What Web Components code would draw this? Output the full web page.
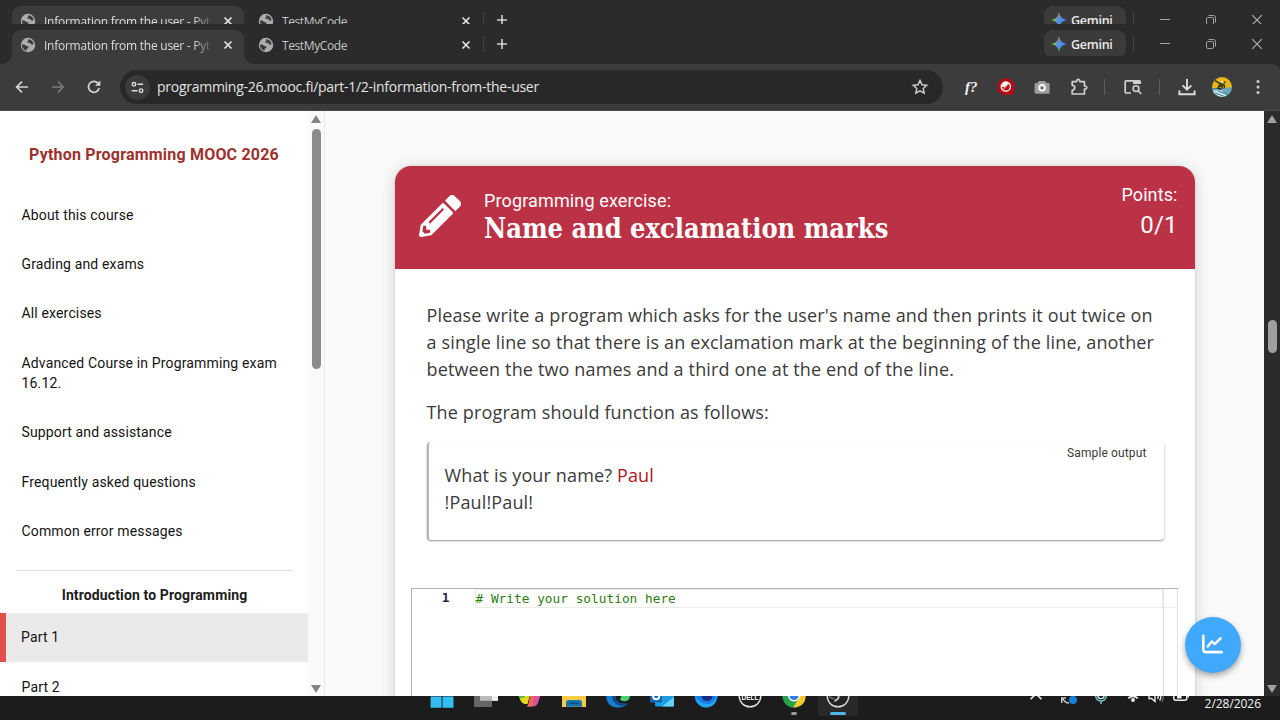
<!DOCTYPE html>
<html lang="en">
<head>
<meta charset="utf-8">
<title>Information from the user - Python Programming MOOC 2026</title>
<style>
    html, body {
        margin: 0;
        height: 100%;
        overflow: hidden;
    }
    body {
        display: flex;
        flex-direction: column;
        width: 1280px;
        height: 720px;
        background: #fff;
        font-family: Roboto, sans-serif;
    }
    .ghost {
        height: 24px;
        flex: none;
        overflow: hidden;
    }
    main {
        display: flex;
        flex: 1;
        min-height: 0;
    }
</style>
</head>
<body>
<div class="ghost"><tab-strip></tab-strip></div>
<tab-strip></tab-strip>
<browser-toolbar url="programming-26.mooc.fi/part-1/2-information-from-the-user"></browser-toolbar>
<main>
    <course-sidebar heading="Python Programming MOOC 2026">
        <nav-item>About this course</nav-item>
        <nav-item>Grading and exams</nav-item>
        <nav-item>All exercises</nav-item>
        <nav-item>Advanced Course in Programming exam 16.12.</nav-item>
        <nav-item>Support and assistance</nav-item>
        <nav-item>Frequently asked questions</nav-item>
        <nav-item>Common error messages</nav-item>
        <nav-section>Introduction to Programming</nav-section>
        <nav-item active>Part 1</nav-item>
        <nav-item>Part 2</nav-item>
    </course-sidebar>
    <content-pane>
        <exercise-card name="Name and exclamation marks" points="0/1">
            <p>Please write a program which asks for the user's name and then prints it out twice on<br>a single line so that there is an exclamation mark at the beginning of the line, another<br>between the two names and a third one at the end of the line.</p>
            <p>The program should function as follows:</p>
            <sample-output>What is your name? <span slot="input">Paul</span><span slot="rest">!Paul!Paul!</span></sample-output>
            <code-editor slot="editor"># Write your solution here</code-editor>
        </exercise-card>
        <points-button slot="floating"></points-button>
    </content-pane>
    <scroll-bar dark style="--top: 209px; --size: 33px"></scroll-bar>
</main>
<task-bar date="2/28/2026"></task-bar>

<script>
// every icon is [viewBox, markup]
const icons = {
    globe: ['0 0 16 16', '<circle cx="8" cy="8" r="7.2" fill="#adadad"/><path d="M1.800 7.600 4.800 7.800 6.400 9 8.400 9.400 8.200 11 6.800 11.800 6.600 13.800 4.600 13 2.600 11ZM7.800 2.600 9.800 2.400 12.400 4 13.600 6.400 12.800 7.800 11 7.200 10 5.800 8 6 7.400 4.600 8.400 3.800Z" fill="#3b3b3b"/>'],
    close: ['0 0 10 10', '<path d="M1.5 1.5 8.5 8.5M8.5 1.5 1.5 8.5" stroke="currentColor" stroke-width="1.6"/>'],
    plus: ['0 0 12 12', '<path d="M6 1V11M1 6H11" stroke="currentColor" stroke-width="1.6"/>'],
    gemini: ['0 0 16 16', '<defs><linearGradient id="g" x1="0" y1=".3" x2="1" y2=".6"><stop offset="0" stop-color="#f3c43c"/><stop offset=".3" stop-color="#5fb878"/><stop offset=".5" stop-color="#4f8df5"/><stop offset="1" stop-color="#4f8df5"/></linearGradient><linearGradient id="r" x1="0" y1="0" x2="0" y2="1"><stop offset="0" stop-color="#ee5a5a"/><stop offset=".42" stop-color="#ee5a7a" stop-opacity="0"/><stop offset=".65" stop-color="#3fae62" stop-opacity="0"/><stop offset="1" stop-color="#3fbe62"/></linearGradient></defs><path d="M8 .3C9 5 11 7 15.700 8 11 9 9 11 8 15.700 7 11 5 9 .3 8 5 7 7 5 8 .3Z" fill="url(#g)"/><path d="M8 .3C9 5 11 7 15.700 8 11 9 9 11 8 15.700 7 11 5 9 .3 8 5 7 7 5 8 .3Z" fill="url(#r)"/>'],
    minimize: ['0 0 12 12', '<path d="M1 5.500H11" stroke="#a2a2a2"/>'],
    restore: ['0 0 12 12', '<rect x="1.5" y="3.5" width="7" height="7" rx="1.4" fill="none" stroke="#a2a2a2"/><path d="M3.5 1.5H8.5Q10.5 1.5 10.5 3.5V8.5" fill="none" stroke="#a2a2a2"/>'],
    exit: ['0 0 12 12', '<path d="M1.2 1.2 10.8 10.8M10.8 1.2 1.2 10.8" stroke="#b5b5b5" stroke-width="1.1"/>'],
    back: ['0 0 16 16', '<path d="M14 8H2.6M8 2.6 2.6 8 8 13.4" fill="none" stroke="#d4d4d4" stroke-width="1.7"/>'],
    forward: ['0 0 16 16', '<path d="M2 8H13.4M8 2.6 13.4 8 8 13.4" fill="none" stroke="#7d7d7d" stroke-width="1.5"/>'],
    reload: ['0 0 16 16', '<path d="M13.2 9A5.4 5.4 0 1 1 12 4.3L13.6 6" fill="none" stroke="#d4d4d4" stroke-width="1.7"/><path d="M14.3 1.6V6.8H9.1Z" fill="#d4d4d4"/>'],
    tune: ['0 0 16 16', '<g fill="none" stroke="#dedede" stroke-width="1.5"><circle cx="4.2" cy="4.6" r="1.9"/><path d="M8 4.6H14M1.8 11.4H8"/><circle cx="11.8" cy="11.4" r="1.9"/></g>'],
    star: ['0 0 18 18', '<path d="M9 2.400 11 6.800 15.800 7.300 12.200 10.500 13.200 15.200 9 12.800 4.800 15.200 5.800 10.500 2.200 7.300 7 6.800Z" fill="none" stroke="#d0d0d0" stroke-width="1.4"/>'],
    blocker: ['0 0 18 18', '<path d="M5.4.6H12.6L17.4 5.4V12.6L15.8 17H5.4L.6 12.6V5.4Z" fill="#b10f16"/><circle cx="8.8" cy="8.6" r="4.6" fill="none" stroke="#fff" stroke-width="1.3"/><path d="M5.2 8.6C5 5.4 8 4 11.2 5.2L8.6 7.8 7.6 8.8ZM6 11.6 11.8 5.6" fill="#fff" stroke="#fff" stroke-width=".8"/>'],
    camera: ['0 0 18 18', '<path d="M5.6 3H12.2L13.4 5H15.6Q16.6 5 16.6 6V14.6Q16.6 15.8 15.4 15.8H2.8Q1.6 15.8 1.6 14.6V6Q1.6 5 2.6 5H4.6Z" fill="#9d9d9d"/><circle cx="9" cy="9.8" r="2.8" fill="#777" stroke="#fff" stroke-width="1.9"/>'],
    puzzle: ['0 0 18 18', '<path d="M2.2 3.6H6.6V2.8Q7 1.4 8.2 1.4T9.8 2.8V3.6H14.4V8H15.4Q16.8 8.4 16.8 9.6T15.4 11.2H14.4V16H2.2V12.4Q4.8 11.8 4.8 9.8T2.2 7.2Z" fill="none" stroke="#cfcfcf" stroke-width="1.7" stroke-linejoin="round"/>'],
    search: ['0 0 18 18', '<path d="M7 15H2.2Q1.2 15 1.2 14V3.8Q1.2 2.8 2.2 2.8H15.2Q16.2 2.8 16.2 3.8V6" fill="none" stroke="#cfcfcf" stroke-width="1.7"/><path d="M9 2.6H16V6H9Z" fill="#cfcfcf"/><circle cx="12" cy="10.6" r="2.9" fill="none" stroke="#cfcfcf" stroke-width="1.6"/><path d="M14 12.6 17.2 16" stroke="#cfcfcf" stroke-width="1.7"/>'],
    download: ['0 0 18 18', '<path d="M9 1V11.4M4.6 7.4 9 11.6 13.4 7.4M1.4 12.6V16.2H16.6V12.6" fill="none" stroke="#dcdcdc" stroke-width="1.9"/>'],
    avatar: ['0 0 20 20', '<defs><clipPath id="c"><circle cx="10" cy="10" r="10"/></clipPath></defs><g clip-path="url(#c)"><path d="M0 0H20V11H0Z" fill="#e9b518"/><path d="M0 11 8 12 20 10V20H0Z" fill="#6aa9bb"/><path d="M0 14 9 13 16 20H0Z" fill="#c6e2e6"/><path d="M3 16 14 20M6 14 17 18" stroke="#3f8298"/><path d="M3 3.600 8 6.600 13.500 5M8 6.600 6 11 9 12.500M12 7 12.500 11" fill="none" stroke="#28301f" stroke-width="1.400"/><path d="M8 6 12 7 11 11 7 10Z" fill="#3b4a1e"/><path d="M9 4.600 11.500 5.600" stroke="#fff" stroke-width="1.5"/></g>'],
    more: ['0 0 4 16', '<g fill="#d0d0d0"><circle cx="2" cy="2.4" r="1.5"/><circle cx="2" cy="8" r="1.5"/><circle cx="2" cy="13.6" r="1.5"/></g>'],
    pencil: ['0 0 512 512', '<path fill="#fff" d="M497.9 142.1l-46.1 46.1c-4.7 4.7-12.3 4.7-17 0l-111-111c-4.700-4.700-4.700-12.300 0-17l46.100-46.100c18.700-18.700 49.100-18.700 67.900 0l60.100 60.100c18.800 18.700 18.800 49.100 0 67.900zM284.200 99.800L21.600 362.400.4 483.900c-2.900 16.400 11.400 30.600 27.800 27.800l121.500-21.300 262.600-262.600c4.700-4.700 4.700-12.300 0-17l-111-111c-4.800-4.700-12.400-4.700-17.100 0zM124.100 339.900c-5.500-5.500-5.500-14.300 0-19.800l154-154c5.500-5.500 14.300-5.500 19.800 0s5.500 14.300 0 19.800l-154 154c-5.500 5.500-14.300 5.500-19.800 0zM88 424h48v36.300l-64.500 11.300-31.100-31.100L51.700 376H88v48z"/>'],
    chart: ['0 0 24 24', '<path d="M2.400 3V17.500Q2.400 20 5 20H21.600" fill="none" stroke="#fff" stroke-width="2.700" stroke-linecap="round"/><path d="M7 14 11.200 8.800 14.400 11.600 20.400 5.600" fill="none" stroke="#fff" stroke-width="2.500" stroke-linecap="round" stroke-linejoin="round"/>'],
    windows: ['0 0 24 24', '<path d="M.6 0H11.600V23.700H.6ZM12.500 0H23.500V23.700H12.500Z" fill="#35bdf2"/><path d="M0 12H24" stroke="#1c1c1c"/>'],
    taskview: ['0 0 24 24', '<path d="M0 8H18V23H0Z" fill="#666"/><path d="M6 0H24V16.800H6Z" fill="#b9b9b9"/><path d="M18 8H24V16.800H18Z" fill="#f0f0f0"/>'],
    copilot: ['0 0 24 24', '<path d="M1 8H13L9.500 20H7Q3 20 1 12Z" fill="#e4d51f"/><path d="M1 8 8 8 6 14 1.800 14Z" fill="#54bb41"/><path d="M13 8H23.500L20 19Q18.500 22.500 14.500 22.500H8.500Q10.500 21 11 18Z" fill="#d9529b"/><path d="M14 8H17L14 22.500H9Q10.500 21 11 18Z" fill="#ef6a54"/>'],
    explorer: ['0 0 24 24', '<path d="M0 4H24V23H0Z" fill="#f7cb45"/><path d="M4 22.800V18.500Q4 16 6.500 16H17.500Q20 16 20 18.500V22.800Z" fill="#1673ad"/><path d="M7 19.200H17" stroke="#0b4b83" stroke-width="1.400"/>'],
    edge: ['0 0 24 24', '<path d="M0 10Q0 23.600 12.500 23.600 18 23.600 22 19.500 14 21 10.500 16 8.500 13 10.500 8Z" fill="#187fd0"/><path d="M10.500 8Q8.500 13 10.500 16 14 21 22 19.500 17 24 10 20 5 16 6 8Z" fill="#114a8b"/><path d="M15 8H24V12Q23.600 17.200 18.500 17.200 14.500 17 14 15 16.500 12 15 8Z" fill="#4bd173"/>'],
    outlook: ['0 0 24 24', '<path d="M5 6H24V21.500Q24 22.500 23 22.500H6.500Q5 22.500 5 21Z" fill="#1f9de2"/><path d="M12 22.500 24 13V21.500Q24 22.500 23 22.500Z" fill="#64d1f5"/><path d="M0 7H12V18.500H1.500Q0 18.500 0 17Z" fill="#1468b5"/><circle cx="6.200" cy="12.300" r="3" fill="none" stroke="#fff" stroke-width="2"/>'],
    thunderbird: ['0 0 24 24', '<circle cx="12" cy="12" r="11.400" fill="#197be3"/><path d="M1 10Q4 20 14 20 21 19 23 10L23.400 13Q21 23.400 12 23.400 2 23 1 10Z" fill="#22a7f7"/><circle cx="13" cy="11.500" r="5.500" fill="#172d83"/>'],
    dell: ['0 0 24 24', '<circle cx="12" cy="12" r="10.800" fill="#1c1c1c" stroke="#e6e6e6" stroke-width="1.400"/><text x="12" y="15.500" text-anchor="middle" font-family="Liberation Sans, sans-serif" font-size="8" font-weight="700" textLength="17" lengthAdjust="spacingAndGlyphs" fill="#fff">DELL</text>'],
    chrome: ['0 0 24 24', '<circle cx="12" cy="12" r="11.600" fill="#27a350"/><path d="M12 12H23.600Q23.600 22.500 11 23.600L17 14Z" fill="#f9ca2e"/><circle cx="12" cy="11.500" r="6" fill="#fff"/><circle cx="12" cy="11.500" r="4.600" fill="#327ce8"/>'],
    obs: ['0 0 24 24', '<circle cx="12" cy="12" r="10.800" fill="#242424" stroke="#d8d8d8" stroke-width="1.400"/><path d="M12.500 11Q13.500 15 8.500 17" fill="none" stroke="#c7c7c7" stroke-width="2"/><path d="M3 12Q6 15 8.500 14.500" fill="none" stroke="#777" stroke-width="1.200"/>'],
    chevron: ['0 0 16 16', '<path d="M2.600 11.200 8 5.800 13.400 11.200" fill="none" stroke="#e2e2e2" stroke-width="1.700"/>'],
    sync: ['0 0 16 16', '<path d="M0 10H5M0.700 10V15M1 10.500 4 13.500Q5 15 8 15" fill="none" stroke="#ccc" stroke-width="1.400"/><circle cx="12" cy="12" r="4" fill="#1880d6"/>'],
    mic: ['0 0 16 16', '<path d="M8 13V16M2.500 6Q2.500 13 8 13T13.500 6" fill="none" stroke="#7fc9d3" stroke-width="1.400"/><path d="M5 6V8Q5 10.600 8 10.600T11 8V6" fill="none" stroke="#cff0f3" stroke-width="1.400"/>'],
    wifi: ['0 0 16 16', '<path d="M.6 7Q8 0 15.400 7M3.300 10.400Q8 6 12.700 10.400" fill="none" stroke="#ececec" stroke-width="1.800"/><circle cx="8" cy="12" r="1.900" fill="#ececec"/>'],
    volume: ['0 0 16 16', '<path d="M1 6H3.500L7 3V13.500L3.500 10.500H1ZM9.500 6Q11 8.500 9.500 11M11.700 4.500Q14 8.500 11.700 12.500" fill="none" stroke="#e8e8e8" stroke-width="1.400"/><path d="M13.700 3Q17 8.500 13.700 14" fill="none" stroke="#888"/>'],
    battery: ['0 0 16 16', '<rect x=".8" y="3.500" width="13" height="8.700" rx="2" fill="none" stroke="#eee" stroke-width="1.500"/><path d="M4 5H8.500V10.500H4ZM10 5H12V8H10ZM14.500 6.500H16V9.500H14.500Z" fill="#eee"/>']
};

class AppIcon extends HTMLElement {
    connectedCallback() {
        const [box, markup] = icons[this.getAttribute('name')];
        this.attachShadow({ mode: 'open' }).innerHTML = `
            <style>
                :host { display: block; flex: none; width: 16px; height: 16px; }
                svg { display: block; width: 100%; height: 100%; }
            </style>
            <svg viewBox="${box}">${markup}</svg>`;
    }
}
customElements.define('app-icon', AppIcon);

// small helper so that each element is just a template
function define(tag, render) {
    customElements.define(tag, class extends HTMLElement {
        connectedCallback() {
            this.attachShadow({ mode: 'open' }).innerHTML = render(this);
        }
    });
}

define('tab-strip', () => `
    <style>
        :host {
            display: flex;
            flex: none;
            align-items: flex-start;
            box-sizing: border-box;
            height: 40px;
            padding-top: 6px;
            background: #2b2b2b;
            color: #c6c6c6;
            font: 12px/30px "Open Sans", "Noto Sans", sans-serif;
            letter-spacing: -.25px;
        }
        .tab {
            display: flex;
            align-items: center;
            box-sizing: border-box;
            width: 232px;
            height: 34px;
            margin-left: 12px;
            padding: 0 11px 4px 8px;
            gap: 8px;
        }
        .tab.active {
            position: relative;
            background: #3c3c3c;
            border-radius: 9px 9px 0 0;
            color: #dcdcdc;
        }
        /* the outward curves at the foot of the active tab */
        .active::before, .active::after {
            content: "";
            position: absolute;
            bottom: 0;
            left: -9px;
            width: 9px;
            height: 9px;
            background: radial-gradient(circle at 0 0, #2b2b2b 8.500px, #3c3c3c 9px);
        }
        .active::after {
            left: auto;
            right: -9px;
            background: radial-gradient(circle at 100% 0, #2b2b2b 8.500px, #3c3c3c 9px);
        }
        .title {
            flex: 1;
            overflow: hidden;
            padding-top: 1px;
            white-space: nowrap;
        }
        .active .title {
            margin-right: 6px;
            -webkit-mask: linear-gradient(90deg, #000 148px, transparent 172px);
        }
        .tab app-icon[name="globe"] { margin-top: -1px; }
        .second { margin-left: 6px; width: 232px; padding-right: 11px; }
        .second .title { letter-spacing: -.4px; }
        app-icon[name="close"] { width: 10px; height: 10px; color: #e6e6e6; }
        app-icon[name="plus"] { width: 12px; height: 12px; margin: 8px 0 0 12px; color: #d2d2d2; }
        .line { width: 1px; height: 16px; margin: 6px 0 0 1px; background: #444; }
        .gemini {
            display: flex;
            align-items: center;
            gap: 4px;
            box-sizing: border-box;
            width: 82px;
            height: 28px;
            margin-left: auto;
            padding-left: 7px;
            border-radius: 9px;
            background: #3b3b3b;
            color: #ececec;
            font-weight: 600;
            font-size: 12.500px;
        }
        .gemini span { padding-top: 2px; }
        .window {
            display: flex;
            gap: 34px;
            padding: 8px 17px 0 25px;
        }
        .window app-icon { width: 12px; height: 12px; }
    </style>
    <div class="tab active"><app-icon name="globe"></app-icon><span class="title">Information from the user - Pyth</span><app-icon name="close"></app-icon></div>
    <div class="tab second"><app-icon name="globe"></app-icon><span class="title">TestMyCode</span><app-icon name="close"></app-icon></div>
    <div class="line"></div>
    <app-icon name="plus"></app-icon>
    <div class="gemini"><app-icon name="gemini"></app-icon><span>Gemini</span></div>
    <div class="line" style="margin-left:7px"></div>
    <div class="window"><app-icon name="minimize"></app-icon><app-icon name="restore"></app-icon><app-icon name="exit"></app-icon></div>
`);

define('browser-toolbar', (el) => `
    <style>
        :host {
            display: flex;
            flex: none;
            align-items: center;
            box-sizing: border-box;
            height: 47px;
            padding: 0 20px 0 14px;
            background: #3c3c3c;
            border-bottom: 1px solid #4a4a4a;
            border-top-right-radius: 8px;
            box-shadow: 0 -8px 0 #2b2b2b;
            color: #e3e3e3;
            font: 14px/20px "Open Sans", "Noto Sans", sans-serif;
        }
        .nav { display: flex; gap: 20px; width: 106px; }
        .url {
            display: flex;
            align-items: center;
            box-sizing: border-box;
            width: 823px;
            height: 34px;
            padding: 0 14px 0 5px;
            border-radius: 17px;
            background: #282828;
        }
        .chip {
            display: flex;
            align-items: center;
            justify-content: center;
            width: 25px;
            height: 25px;
            margin-right: 7px;
            border-radius: 50%;
            background: #3b3b3b;
        }
        .chip app-icon { width: 15px; height: 15px; }
        .url span { flex: 1; letter-spacing: -.27px; }
        .wide { width: 18px; height: 18px; }
        .fx {
            width: 14px;
            margin: 0 18px 0 22px;
            color: #f0f0f0;
            font: italic 700 15px/18px "Liberation Serif", serif;
        }
        .line { width: 1px; height: 16px; background: #5e5e5e; }
    </style>
    <div class="nav"><app-icon name="back"></app-icon><app-icon name="forward"></app-icon><app-icon name="reload"></app-icon></div>
    <div class="url"><div class="chip"><app-icon name="tune"></app-icon></div><span>${el.getAttribute('url')}</span><app-icon class="wide" name="star"></app-icon></div>
    <span class="fx">f?</span>
    <app-icon class="wide" name="blocker"></app-icon>
    <app-icon class="wide" name="camera" style="margin-left:18px"></app-icon>
    <app-icon class="wide" name="puzzle" style="margin:0 16px 0 19px"></app-icon>
    <div class="line"></div>
    <app-icon class="wide" name="search" style="margin:0 17px 0 19px"></app-icon>
    <div class="line"></div>
    <app-icon class="wide" name="download" style="margin:0 16px 0 18px"></app-icon>
    <app-icon name="avatar" style="width:20px;height:20px"></app-icon>
    <app-icon name="more" style="width:4px;margin-left:auto"></app-icon>
`);

define('scroll-bar', () => `
    <style>
        :host {
            --bar: #fbf9fa;
            --thumb: #8b8b8b;
            --arrow: #858585;
            display: flex;
            flex: none;
            flex-direction: column;
            align-items: center;
            box-sizing: border-box;
            width: 16px;
            padding: 4px 0 3px;
            background: var(--bar);
        }
        :host([dark]) { --bar: #2b2b2b; --thumb: #9f9f9f; --arrow: #a0a0a0; }
        i { width: 0; height: 0; border: 5px solid transparent; border-top: 0; border-bottom: 8px solid var(--arrow); }
        i.down { margin-top: auto; border-top: 8px solid var(--arrow); border-bottom: 0; }
        div { width: 9px; height: var(--size); margin-top: calc(var(--top) - 12px); border-radius: 5px; background: var(--thumb); }
    </style>
    <i></i><div></div><i class="down"></i>
`);

define('course-sidebar', (el) => `
    <style>
        :host {
            display: flex;
            flex: none;
            box-sizing: border-box;
            width: 325px;
            background: #fff;
            border-right: 1px solid #eaeaea;
        }
        nav {
            width: 308px;
            overflow: hidden;
        }
        h2 {
            margin: 33px 0 25px;
            color: #9d312c;
            font: 700 16px/21px Roboto, sans-serif;
            letter-spacing: .2px;
            text-align: center;
        }
    </style>
    <nav><h2>${el.getAttribute('heading')}</h2><slot></slot></nav>
    <scroll-bar style="--top: 18px; --size: 240px"></scroll-bar>
`);

define('nav-item', () => `
    <style>
        :host {
            display: block;
            padding: 14.700px 20px 14.700px 21.500px;
            color: #141414;
            font: 14px/20px Roboto, sans-serif;
            letter-spacing: .15px;
        }
        :host([active]) {
            padding-left: 15px;
            border-left: 6.500px solid #e0514b;
            background: #ebe9ea;
        }
    </style>
    <slot></slot>
`);

define('nav-section', () => `
    <style>
        :host {
            display: block;
            margin: 14px 15px 0 16px;
            padding: 14px 0 8px;
            border-top: 1px solid #dedede;
            color: #202020;
            font: 700 14px/20px Roboto, sans-serif;
            letter-spacing: .13px;
            text-align: center;
        }
    </style>
    <slot></slot>
`);

define('content-pane', () => `
    <style>
        :host {
            position: relative;
            display: block;
            flex: 1;
            box-sizing: border-box;
            padding: 55px 0 0 70px;
            overflow: hidden;
            background: #fafafa;
        }
        ::slotted([slot="floating"]) { position: absolute; right: 23.500px; bottom: 23.500px; }
    </style>
    <slot></slot><slot name="floating"></slot>
`);

define('exercise-card', (el) => `
    <style>
        :host {
            display: block;
            width: 800px;
            height: 640px;
            margin-left: -.5px;
            border-radius: 16px;
            background: #fff;
            box-shadow: 0 2px 16px rgba(0, 0, 0, .17), 0 0 3px rgba(0, 0, 0, .1);
        }
        header {
            display: flex;
            align-items: flex-start;
            box-sizing: border-box;
            height: 103px;
            padding: 0 17px 0 24px;
            border-radius: 16px 16px 0 0;
            background: #bb3145;
            color: #fff;
        }
        app-icon { width: 42px; height: 42px; margin: 28.500px 23.500px 0 0; }
        .label { margin-top: 22.500px; font-size: 18px; line-height: 24px; letter-spacing: .13px; }
        h1 {
            margin: 0;
            font: 700 27px/32px "DejaVu Serif", serif;
            font-stretch: condensed;
            letter-spacing: -.03px;
            white-space: nowrap;
        }
        .points { margin: 17px 0 0 auto; font-size: 18px; line-height: 24px; letter-spacing: .1px; text-align: right; }
        .points b { display: block; font-weight: 400; font-size: 24px; line-height: 36px; }
        section {
            padding: 33px 31px 0 32px;
            color: #3b3b3b;
            font: 18px/27px "Open Sans", sans-serif;
            letter-spacing: .146px;
        }
        ::slotted(p) { margin: 0 0 16px; white-space: nowrap; }
    </style>
    <header>
        <app-icon name="pencil"></app-icon>
        <div><div class="label">Programming exercise:</div><h1>${el.getAttribute('name')}</h1></div>
        <div class="points">Points:<b>${el.getAttribute('points')}</b></div>
    </header>
    <section><slot></slot></section>
    <slot name="editor"></slot>
`);

define('sample-output', () => `
    <style>
        :host {
            display: grid;
            grid-template-columns: 1fr auto;
            box-sizing: border-box;
            height: 98px;
            padding: 0 17px 0 16px;
            border-left: 2px solid #b5b5b5;
            border-radius: 4px;
            background: #fff;
            box-shadow: 0 1px 2px rgba(0, 0, 0, .42);
        }
        .text { padding-top: 20px; }
        .label { padding-top: 1px; font: 12px/21px Roboto, sans-serif; letter-spacing: .13px; }
        ::slotted([slot="input"]) { color: #b3131d; }
    </style>
    <div class="text"><div><slot></slot><slot name="input"></slot></div><div><slot name="rest"></slot></div></div>
    <div class="label">Sample output</div>
`);

define('code-editor', () => `
    <style>
        :host {
            display: flex;
            box-sizing: border-box;
            width: 767px;
            height: 200px;
            margin: 48px 0 0 16px;
            border: solid #b4b4b4;
            border-width: 1px 0 0 1px;
            font: 12.800px/18px "DejaVu Sans Mono", monospace;
        }
        .number { width: 38px; padding-right: 25px; color: #2c2250; font-weight: 700; text-align: right; }
        .code { flex: 1; height: 17px; border: 1px solid #ececec; line-height: 17px; color: #2f7d14; }
        .rail { width: 13px; height: 115px; border: solid #e2e2e2; border-width: 0 1px; }
        .rail div { height: 18px; border-bottom: 1px solid #ececec; }
    </style>
    <div class="number">1</div><div class="code"><slot></slot></div><div class="rail"><div></div></div>
`);

define('points-button', () => `
    <style>
        :host {
            display: flex;
            align-items: center;
            justify-content: center;
            width: 56px;
            height: 56px;
            border-radius: 50%;
            background: #40a9fc;
            box-shadow: 0 3px 6px rgba(0, 0, 0, .35);
        }
        app-icon { width: 23px; height: 23px; }
    </style>
    <app-icon name="chart"></app-icon>
`);

const apps = ['windows', 'taskview', 'copilot', 'explorer', 'edge', 'outlook', 'thunderbird', 'dell', 'chrome', 'obs'];

define('task-bar', (el) => `
    <style>
        :host {
            display: block;
            flex: none;
            height: 24px;
            overflow: hidden;
            background: #1c1c1c;
        }
        /* the bar is twice as tall as the strip that shows */
        .bar {
            display: flex;
            align-items: center;
            height: 48px;
            margin-top: -24px;
            padding-left: 420px;
        }
        .app {
            position: relative;
            display: flex;
            align-items: center;
            justify-content: center;
            width: 40px;
            height: 40px;
            margin: 0 2px;
            border-radius: 4px;
        }
        .app app-icon { width: 24px; height: 24px; }
        .app.obs { background: #292929; }
        .app.obs::after, .app.chrome::after {
            content: "";
            position: absolute;
            bottom: 1px;
            width: 6px;
            height: 3px;
            border-radius: 2px;
            background: #9a9a9a;
        }
        .app.obs::after { width: 16px; background: #4cb8e8; }
        .tray { display: flex; align-items: center; margin-left: auto; padding-right: 19px; color: #f2f2f2; font: 12px/16px "Open Sans", sans-serif; letter-spacing: -.05px; }
        .tray app-icon { margin-right: 16px; }
        .tray span { margin-top: 15px; }
    </style>
    <div class="bar">
        ${apps.map((a) => `<div class="app ${a}"><app-icon name="${a}"></app-icon></div>`).join('')}
        <div class="tray">
            <app-icon name="chevron" style="margin-right:17px"></app-icon>
            <app-icon name="sync"></app-icon>
            <app-icon name="mic"></app-icon>
            <app-icon name="wifi" style="margin-right:7px"></app-icon>
            <app-icon name="volume" style="margin-right:9px"></app-icon>
            <app-icon name="battery"></app-icon>
            <span>${el.getAttribute('date')}</span>
        </div>
    </div>
`);
</script>
</body>
</html>
